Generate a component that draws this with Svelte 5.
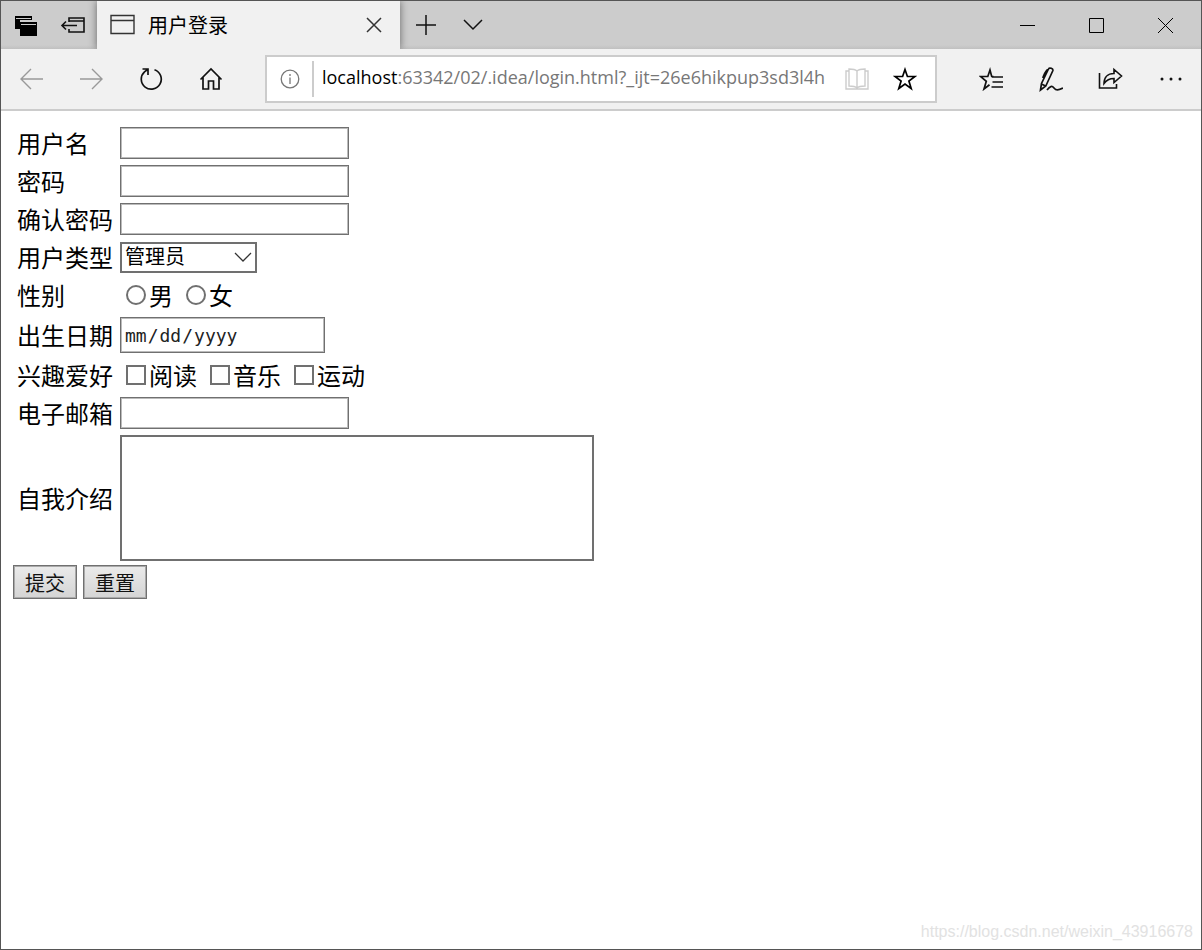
<script lang="ts">
	const TEXT_ROWS = [
		{ id: 'username', label: '用户名', type: 'text' },
		{ id: 'password', label: '密码', type: 'password' },
		{ id: 'confirm', label: '确认密码', type: 'password' }
	];
	const GENDERS = ['男', '女'];
	const HOBBIES = ['阅读', '音乐', '运动'];

	let role = $state('管理员');
</script>

<svelte:head><title>用户登录</title></svelte:head>

<div class="window">
	<header class="titlebar">
		<button class="strip" aria-label="Tabs you've set aside">
			<svg width="24" height="24" viewBox="0 0 24 24">
				<path d="M2 3h17v4H7v9H2z" fill="#000" />
				<path d="M3 5.5h15" stroke="#ccc" />
				<path d="M7 9h17v14H7z" fill="#000" />
				<path d="M8 11.5h15" stroke="#ccc" />
			</svg>
		</button>
		<button class="strip" aria-label="Set these tabs aside">
			<svg width="26" height="20" viewBox="0 0 26 20" fill="none" stroke="#111" stroke-width="1.6">
				<path d="M9 7V3h15v14H9v-3M9 6h15M2 10.500h15M6 6.500l-4 4 4 4" />
			</svg>
		</button>
		<div class="tab">
			<svg width="26" height="22" viewBox="0 0 26 22" fill="none" stroke="#333" stroke-width="1.4">
				<path d="M1 1.500h23v18H1zM1 6.500h23" />
			</svg>
			<span class="tab-title">用户登录</span>
			<button class="tab-close" aria-label="Close tab">
				<svg width="16" height="16" viewBox="0 0 16 16" fill="none" stroke="#333" stroke-width="1.5">
					<path d="M1 1l14 14M15 1L1 15" />
				</svg>
			</button>
		</div>
		<button class="add" aria-label="New tab">
			<svg width="20" height="20" viewBox="0 0 20 20" fill="none" stroke="#111" stroke-width="1.5">
				<path d="M10 0v20M0 10h20" />
			</svg>
		</button>
		<button class="add" aria-label="Tab previews">
			<svg width="20" height="12" viewBox="0 0 20 12" fill="none" stroke="#111" stroke-width="1.5">
				<path d="M1 1l9 9 9-9" />
			</svg>
		</button>
		<div class="grow"></div>
		<button class="win" aria-label="Minimize">
			<svg width="15" height="15" viewBox="0 0 15 15"><path d="M0 7.5h15" stroke="#000" /></svg>
		</button>
		<button class="win" aria-label="Maximize">
			<svg width="15" height="15" viewBox="0 0 15 15"><path d="M.5.5h14v14H.5z" fill="none" stroke="#000" /></svg>
		</button>
		<button class="win" aria-label="Close">
			<svg width="15" height="15" viewBox="0 0 15 15"><path d="M0 0l15 15M15 0L0 15" stroke="#000" /></svg>
		</button>
	</header>

	<nav class="toolbar">
		<button class="tool" aria-label="Back" disabled>
			<svg width="24" height="24" viewBox="0 0 24 24" fill="none" stroke="#999" stroke-width="1.4">
				<path d="M12 2L2 12l10 10M2 12h22" />
			</svg>
		</button>
		<button class="tool" aria-label="Forward" disabled>
			<svg width="24" height="24" viewBox="0 0 24 24" fill="none" stroke="#999" stroke-width="1.4">
				<path d="M13 2l10 10-10 10M23 12H1" />
			</svg>
		</button>
		<button class="tool" aria-label="Refresh">
			<svg width="24" height="24" viewBox="0 0 24 24" fill="none" stroke="#111" stroke-width="1.7">
				<path d="M15.500 2.700A10 10 0 1 1 5.500 4.800L8.500 2.500M3.500 2H9v6" />
			</svg>
		</button>
		<button class="tool" aria-label="Home">
			<svg width="24" height="24" viewBox="0 0 24 24" fill="none" stroke="#111" stroke-width="1.7">
				<path d="M1.500 12.500L12 2l10.500 10.500M4 10.500V22h5.500v-8h5v8H20V10.500" />
			</svg>
		</button>

		<div class="address">
			<button class="info" aria-label="Site information">
				<svg width="20" height="20" viewBox="0 0 20 20" fill="none" stroke="#777" stroke-width="1.3">
					<circle cx="10" cy="10" r="8.800" />
					<path d="M10 8.500V15M10 5v2" />
				</svg>
			</button>
			<div class="url" role="textbox" tabindex="0" contenteditable="true" aria-label="Address"><b>localhost</b>:63342/02/.idea/login.html?_ijt=26e6hikpup3sd3l4h</div>
			<button class="inner" aria-label="Reading view" disabled>
				<svg width="24" height="24" viewBox="0 0 24 24" fill="none" stroke="#ccc" stroke-width="1.400">
					<path d="M12 4C10 2 7 2 4 2v17c3 0 6 0 8 2 2-2 5-2 8-2V2c-3 0-6 0-8 2zM12 4v18M4 4H1v18h22V4h-3" />
				</svg>
			</button>
			<button class="inner" aria-label="Add to favorites">
				<svg width="24" height="24" viewBox="0 0 24 24" fill="none" stroke="#000" stroke-width="1.700">
					<path d="M12 2.500l2.400 7H22l-6.100 4.600 2.300 7.400-6.200-4.500-6.200 4.500 2.300-7.400L2 9.500h7.600z" />
				</svg>
			</button>
		</div>

		<button class="tool" aria-label="Favorites">
			<svg width="24" height="24" viewBox="0 0 24 24" fill="none" stroke="#111" stroke-width="1.700">
				<path d="M14.500 9.500h-1.800L11 3 8.800 9.500H1.500l5.800 4.800L5 22l5.500-4.200M13 10h11M13.500 15H24M12.500 20H24" />
			</svg>
		</button>
		<button class="tool" aria-label="Add notes">
			<svg width="24" height="26" viewBox="0 0 24 26" fill="none" stroke="#111" stroke-width="1.700">
				<path d="M1.500 24l1-6.500L9.500 3c1-2 5-.5 4.300 1.800L6.800 20zM9 3.500C6.500 4 5.500 8 3.800 12M2.500 18l4 2M8 24c3-4 5-4.500 7-2s4 2.500 9 0" />
			</svg>
		</button>
		<button class="tool" aria-label="Share">
			<svg width="26" height="24" viewBox="0 0 26 24" fill="none" stroke="#111" stroke-width="1.600">
				<path d="M1.500 6v15h17v-4M6 16.500c0-6 3.500-10 10-10V2.500L23.500 9 16 15.500v-4c-4.500 0-7.500 1.500-10 5z" />
			</svg>
		</button>
		<button class="tool" aria-label="Settings and more">
			<svg width="24" height="6" viewBox="0 0 24 6" fill="#111">
				<circle cx="3" cy="3" r="1.500" /><circle cx="12" cy="3" r="1.500" /><circle cx="21" cy="3" r="1.500" />
			</svg>
		</button>
	</nav>

	<main>
		<form onsubmit={(e) => e.preventDefault()}>
			<table>
				<tbody>
					{#each TEXT_ROWS as row (row.id)}
						<tr>
							<th><label for={row.id}>{row.label}</label></th>
							<td><input class="text" id={row.id} name={row.id} type={row.type} /></td>
						</tr>
					{/each}
					<tr>
						<th><label for="role">用户类型</label></th>
						<td>
							<select id="role" bind:value={role}>
								<option>管理员</option>
								<option>普通用户</option>
							</select>
						</td>
					</tr>
					<tr>
						<th>性别</th>
						<td>
							<div class="choices">
								{#each GENDERS as g (g)}
									<label><input type="radio" name="gender" value={g} /><span>{g}</span></label>
								{/each}
							</div>
						</td>
					</tr>
					<tr>
						<th><label for="birthday">出生日期</label></th>
						<td><input class="date" id="birthday" name="birthday" type="date" /></td>
					</tr>
					<tr>
						<th>兴趣爱好</th>
						<td>
							<div class="choices">
								{#each HOBBIES as h (h)}
									<label><input type="checkbox" name="hobby" value={h} /><span>{h}</span></label>
								{/each}
							</div>
						</td>
					</tr>
					<tr>
						<th><label for="email">电子邮箱</label></th>
						<td><input class="text" id="email" name="email" type="text" /></td>
					</tr>
					<tr>
						<th><label for="intro">自我介绍</label></th>
						<td><textarea id="intro" name="intro"></textarea></td>
					</tr>
				</tbody>
			</table>
			<div class="actions">
				<button type="submit">提交</button>
				<button type="reset">重置</button>
			</div>
		</form>
	</main>

	<span class="watermark">https://blog.csdn.net/weixin_43916678</span>
</div>

<style>
	:global(body) { margin: 0; }
	.window { position: relative; box-sizing: border-box; min-height: 100vh; display: flex; flex-direction: column; border: 1px solid #555; background: #fff; color: #000; font-family: 'Open Sans', 'Noto Sans CJK SC', sans-serif; }
	button, input, select, textarea { box-sizing: border-box; margin: 0; font-family: inherit; border-radius: 0; }
	svg { display: block; flex: none; }

	.titlebar { display: flex; height: 48px; padding-right: 1px; background: linear-gradient(#ccc 44px, #c0c0c0); }
	.titlebar button, .toolbar button { display: flex; align-items: center; justify-content: center; padding: 0; border: 0; background: none; }
	.titlebar .strip { width: 48px; }
	.tab { position: relative; display: flex; align-items: center; gap: 12px; box-sizing: border-box; width: 303px; padding: 0 12px 0 13px; background: #f1f1f1; box-shadow: 0 0 8px rgba(0, 0, 0, 0.5); clip-path: inset(0 -10px); }
	.tab-title { flex: 1; padding-top: 2px; font-size: 20px; line-height: 28px; }
	.tab .tab-close { width: 28px; height: 28px; }
	.titlebar .add { width: 47px; }
	.tab + .add { margin-left: 2px; }
	.grow { flex: 1; }
	.titlebar .win { width: 69px; }

	.toolbar { display: flex; align-items: center; height: 60px; background: #f1f1f1; border-bottom: 2px solid #ccc; }
	.toolbar .tool { width: 60px; height: 60px; }
	.address { flex: 1; min-width: 0; display: flex; align-items: center; box-sizing: border-box; height: 48px; margin: 0 24px; border: 2px solid #ccc; background: #fff; }
	.toolbar .info { width: 47px; height: 36px; border-right: 2px solid #ccc; }
	.url { flex: 1; min-width: 0; padding: 0 0 4px 8px; overflow: hidden; white-space: nowrap; font-size: 18px; line-height: 28px; color: #777; outline: none; }
	.url b { font-weight: 400; color: #000; }
	.toolbar .inner { width: 48px; height: 44px; }
	.address .inner:last-child { margin-right: 6px; }

	main { flex: 1; padding: 13px 12px; }
	table { border-collapse: collapse; }
	tr { height: 38px; }
	th, td { padding: 3px; }
	th { padding: 5px 3px 3px 4px; font-size: 24px; line-height: 30px; font-weight: 400; text-align: left; white-space: nowrap; }
	td { padding-left: 4px; }
	td > * { display: block; }
	.text, .date { border: 1px solid #707070; box-shadow: inset 0 0 0 1px #bbb; background: #fff; outline: none; }
	.text { width: 229px; height: 32px; padding: 0 5px; font-size: 20px; }
	.date { width: 205px; height: 36px; padding: 0 3px; font-family: 'DejaVu Sans Mono', monospace; font-size: 18px; color: #222; }
	.date::-webkit-calendar-picker-indicator { display: none; }
	select { appearance: none; width: 137px; height: 31px; padding: 0 24px 2px 3px; border: 2px solid #707070; font-size: 20px; line-height: 26px; color: #000; background: #fff url("data:image/svg+xml,%3Csvg xmlns='http://www.w3.org/2000/svg' width='18' height='10' fill='none' stroke='%23333' stroke-width='1.3'%3E%3Cpath d='M1 1l8 8 8-8'/%3E%3C/svg%3E") no-repeat right 3px center; }
	textarea { width: 474px; height: 126px; padding: 4px; border: 2px solid #707070; font-size: 20px; resize: none; }
	.choices { display: flex; gap: 13px; padding-left: 6px; }
	.choices label { display: flex; align-items: center; gap: 3px; font-size: 24px; line-height: 30px; }
	.choices span { padding-top: 2px; }
	.choices input { appearance: none; width: 20px; height: 20px; border: 2px solid #707070; background: #fff; }
	.choices input[type='radio'] { border-radius: 50%; }
	.choices input:checked { background: #333; box-shadow: inset 0 0 0 3px #fff; }
	.actions { display: flex; gap: 6px; padding-top: 1px; }
	.actions button { height: 34px; padding: 3px 11px 0; border: 1px solid #707070; box-shadow: inset 0 0 0 1px #aaa; background: linear-gradient(#ebebeb, #d4d4d4); color: #111; font-size: 20px; line-height: 28px; }

	.watermark { position: absolute; right: 8px; bottom: 8px; font-family: 'Liberation Sans', Arial, sans-serif; font-size: 16px; line-height: 18px; color: #e2e2e2; pointer-events: none; }
</style>
